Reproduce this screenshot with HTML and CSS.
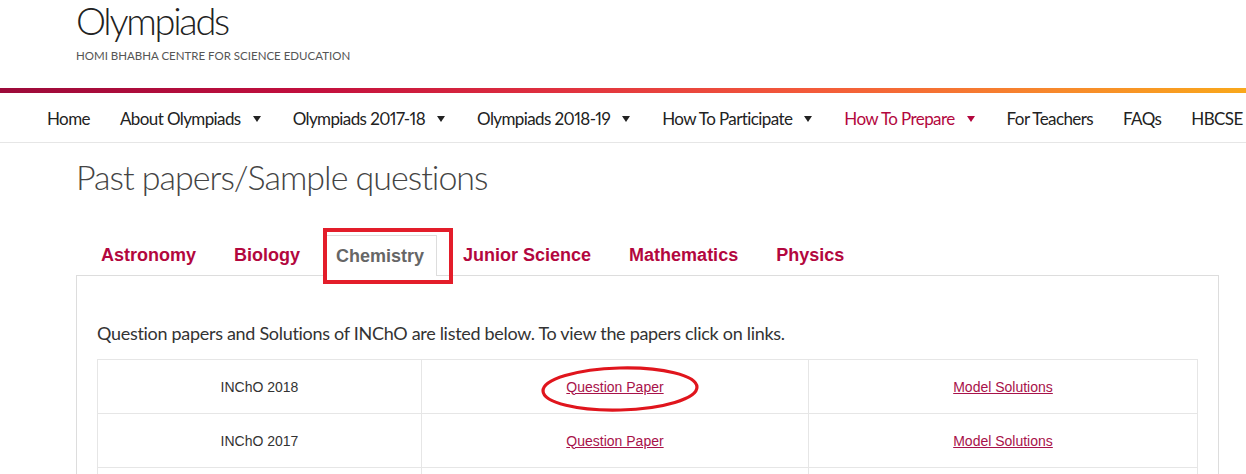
FILE: index.html
```html
<!DOCTYPE html>
<html lang="en">
<head>
<meta charset="utf-8">
<title>Past papers/Sample questions | Olympiads</title>
<link rel="stylesheet" href="styles.css">
</head>
<body>
<header class="brand">
  <div class="site-name">Olympiads</div>
  <div class="site-slogan">HOMI BHABHA CENTRE FOR SCIENCE EDUCATION</div>
</header>
<div class="stripe"></div>
<nav class="mainnav">
  <ul>
    <li><a href="#">Home</a></li>
    <li class="has-sub"><a href="#">About Olympiads</a><span class="caret"></span></li>
    <li class="has-sub"><a href="#">Olympiads 2017-18</a><span class="caret"></span></li>
    <li class="has-sub"><a href="#">Olympiads 2018-19</a><span class="caret"></span></li>
    <li class="has-sub"><a href="#">How To Participate</a><span class="caret"></span></li>
    <li class="has-sub active"><a href="#">How To Prepare</a><span class="caret"></span></li>
    <li><a href="#">For Teachers</a></li>
    <li><a href="#">FAQs</a></li>
    <li><a href="#">HBCSE</a></li>
  </ul>
</nav>
<main class="content">
  <h1 class="page-title">Past papers/Sample questions</h1>
  <ul class="tabs">
    <li><a href="#">Astronomy</a></li>
    <li><a href="#">Biology</a></li>
    <li class="current"><a href="#">Chemistry</a><span class="mark-box"></span></li>
    <li><a href="#">Junior Science</a></li>
    <li><a href="#">Mathematics</a></li>
    <li><a href="#">Physics</a></li>
  </ul>
  <div class="panel">
    <p class="intro">Question papers and Solutions of INChO are listed below. To view the papers click on links.</p>
    <table class="papers">
      <colgroup><col class="c1"><col class="c2"><col class="c3"></colgroup>
      <tr>
        <td>INChO 2018</td>
        <td class="circled"><a href="#">Question Paper</a>
          <svg class="mark-ellipse" width="164" height="50" viewBox="0 0 164 50"><ellipse cx="82" cy="25" rx="77" ry="21" fill="none" stroke="#e0151d" stroke-width="3.2" transform="rotate(-1.5 82 25)"/></svg>
        </td>
        <td><a href="#">Model Solutions</a></td>
      </tr>
      <tr>
        <td>INChO 2017</td>
        <td><a href="#">Question Paper</a></td>
        <td><a href="#">Model Solutions</a></td>
      </tr>
      <tr>
        <td>INChO 2016</td>
        <td><a href="#">Question Paper</a></td>
        <td><a href="#">Model Solutions</a></td>
      </tr>
    </table>
  </div>
</main>
</body>
</html>
```
FILE: styles.css
```css
:root {
  --cond: Lato, "Open Sans", sans-serif;
  --crimson: #b3073e;
}
html, body { margin: 0; padding: 0; background: #fff; }
body { font-family: var(--cond); color: #222; overflow: hidden; height: 474px; }
a { text-decoration: none; color: inherit; }

.brand { height: 88px; padding-left: 76px; box-sizing: border-box; }
.site-name { font-size: 38px; font-weight: 300; line-height: 40px; color: #222; letter-spacing: -2.3px; }
.site-slogan { font-size: 11.5px; letter-spacing: 0; color: #555; margin-top: 9px; }

.stripe { height: 5px; background: linear-gradient(90deg, #9c0a3a 0%, #c20f3d 25%, #e0313f 45%, #f35a3a 65%, #f7892c 85%, #f9a81b 100%); }

.mainnav { border-bottom: 1px solid #e6e6e6; height: 49px; }
.mainnav ul { list-style: none; margin: 0; padding: 2px 0 0 47px; box-sizing: border-box; display: flex; align-items: center; height: 49px; gap: 30px; white-space: nowrap; }
.mainnav li { display: flex; align-items: center; font-size: 17px; letter-spacing: -0.6px; color: #222; font-variant-numeric: proportional-nums; font-feature-settings: "pnum" 1; }
.mainnav li.active { color: var(--crimson); }
.caret { width: 0; height: 0; border-left: 4px solid transparent; border-right: 4px solid transparent; border-top: 6px solid currentColor; margin-left: 12px; margin-right: 2px; }

.content { margin-left: 76px; width: 1143px; }
.page-title { margin: 0; padding-top: 12px; font-size: 34px; font-weight: 300; color: #444; line-height: 44px; letter-spacing: -1px; }

.tabs { list-style: none; margin: 36px 0 0 0; padding: 0 0 0 13px; display: flex; height: 40px; position: relative; z-index: 1; }
.tabs li { position: relative; padding: 0 11px 0 11px; margin-right: 14px; height: 40px; box-sizing: border-box; display: flex; align-items: center; font-family: "Liberation Sans", Arial, sans-serif; font-weight: bold; font-size: 18px; color: var(--crimson); border: 1px solid transparent; border-bottom: none; }
.tabs li.current { color: #666; border-color: #ddd; background: #fff; padding-left: 9px; padding-right: 12px; height: 41px; }
.mark-box { position: absolute; left: -4px; top: -8px; width: 130px; height: 56px; border: 4px solid #e31d2a; box-sizing: border-box; }

.panel { border: 1px solid #ddd; padding: 0 20px; height: 300px; }
.intro { margin: 44px 0 0 0; font-size: 18px; line-height: 26px; color: #333; letter-spacing: -0.3px; }
.papers { margin-top: 13px; width: 100%; border-collapse: collapse; font-family: "Liberation Sans", Arial, sans-serif; font-size: 14px; color: #333; }
.papers col.c1 { width: 324px; }
.papers col.c2 { width: 387px; }
.papers td { border: 1px solid #e6e6e6; height: 53px; text-align: center; vertical-align: middle; padding: 0; }
.papers td a { color: #a8124a; text-decoration: underline; }
.circled { position: relative; }
.mark-ellipse { position: absolute; left: 116px; top: 4px; }
```
